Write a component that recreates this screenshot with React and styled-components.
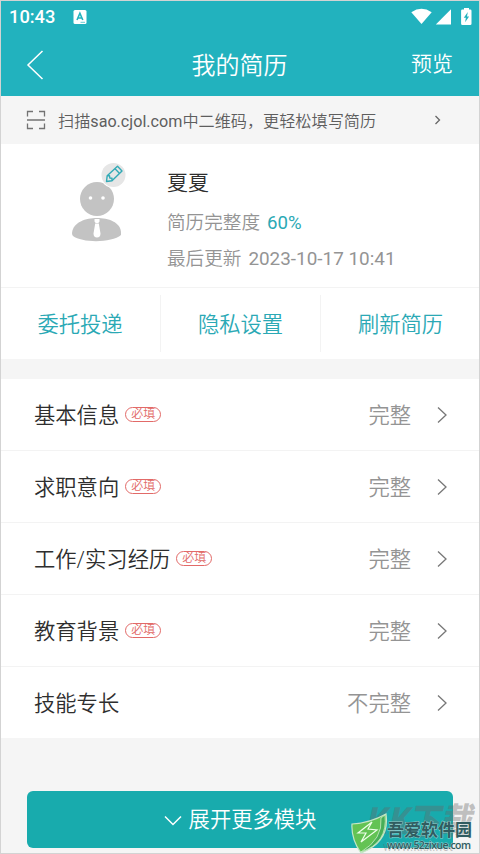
import React from 'react';
import styled, { createGlobalStyle } from 'styled-components';

// ==============================================

const TEAL = '#22b2be';
const TEAL_TEXT = '#2ba9b5';
const LINE = '#f3f3f3';

const SECTIONS = [
  { title: '基本信息', required: true, status: '完整' },
  { title: '求职意向', required: true, status: '完整' },
  { title: '工作/实习经历', required: true, status: '完整' },
  { title: '教育背景', required: true, status: '完整' },
  { title: '技能专长', required: false, status: '不完整' },
];

const ACTIONS = ['委托投递', '隐私设置', '刷新简历'];

// ==============================================

const GlobalStyle = createGlobalStyle`
  * {
    box-sizing: border-box;
  }
  body {
    margin: 0;
    font-family: Roboto, 'Noto Sans CJK SC', sans-serif;
    font-weight: 350;
    overflow: hidden;
  }
`;

const Screen = styled.div`
  position: relative;
  display: flex;
  flex-direction: column;
  width: 480px;
  height: 854px;
  border: 1px solid #d3d3d3;
  background: #f5f5f5;
  color: #2e2e2e;
  overflow: hidden;
`;

const Header = styled.header`
  height: 95px;
  flex: none;
  background: ${TEAL};
  color: #fff;
`;

const StatusBar = styled.div`
  display: flex;
  align-items: center;
  height: 31px;
  padding: 0 7px 0 8px;
`;

const Clock = styled.span`
  width: 64px;
  font-size: 18.3px;
  font-weight: 500;
  line-height: 31px;
`;

const StatusIcons = styled.div`
  display: flex;
  margin-left: auto;
`;

const TitleBar = styled.div`
  display: grid;
  grid-template-columns: 1fr auto 1fr;
  align-items: center;
  height: 64px;
  padding: 0 26px 0 25px;
`;

const Title = styled.h1`
  margin: 0;
  padding-top: 2px;
  font-size: 24px;
  font-weight: 350;
  line-height: 64px;
`;

const Preview = styled.span`
  justify-self: end;
  margin-top: -2px;
  font-size: 21px;
  line-height: 30px;
`;

const ScanTip = styled.div`
  display: flex;
  align-items: center;
  flex: none;
  height: 48px;
  padding: 0 38px 0 25px;
  color: #5e5e5e;
  font-size: 16.15px;
`;

const ScanText = styled.span`
  flex: 1;
  margin-left: 12px;
  white-space: nowrap;
`;

const Latin = styled.span`
  font-weight: 400;
`;

const Profile = styled.section`
  display: flex;
  flex: none;
  height: 144px;
  background: #fff;
  border-bottom: 1px solid ${LINE};
`;

const Avatar = styled.div`
  width: 166px;
  padding: 18px 0 0 69px;
`;

const Info = styled.div`
  display: flex;
  flex-direction: column;
  padding-top: 22px;
  color: #949494;
  font-size: 18.6px;
`;

const Name = styled.div`
  height: 40px;
  color: #2e2e2e;
  font-size: 21px;
  line-height: 34px;
`;

const InfoLine = styled.div`
  height: 35px;
  line-height: 35px;
`;

const Percent = styled(Latin)`
  margin-left: 7px;
  color: ${TEAL_TEXT};
`;

const Stamp = styled(Latin)`
  margin-left: 7px;
  font-size: 18.9px;
`;

const Actions = styled.div`
  display: grid;
  grid-template-columns: repeat(3, 160px);
  justify-content: center;
  flex: none;
  height: 71px;
  padding: 7px 0;
  margin-bottom: 20px;
  background: #fff;
`;

const Action = styled.div`
  display: grid;
  place-items: center;
  padding-bottom: 2px;
  color: ${TEAL_TEXT};
  font-size: 21.3px;

  & + & {
    border-left: 1px solid ${LINE};
  }
`;

const List = styled.div`
  flex: none;
  background: #fff;
`;

const Row = styled.div`
  display: flex;
  align-items: center;
  height: 72px;
  padding: 0 31px 0 33px;
  font-size: 21.3px;

  &:first-child {
    height: 71px;
  }
  & + & {
    border-top: 1px solid ${LINE};
  }
`;

const RowTitle = styled.span`
  margin-top: -3px;
`;

const Required = styled.span`
  display: grid;
  place-items: center;
  width: 36px;
  height: 15px;
  margin: -1px 0 0 6px;
  border: 1px solid #e26a68;
  border-radius: 8px;
  color: #e26a68;
  font-size: 12px;
  line-height: 12px;
`;

const Status = styled.span`
  margin: -3px 26px 0 auto;
  color: #949494;
`;

const Expand = styled.button`
  display: flex;
  justify-content: center;
  align-items: center;
  flex: none;
  gap: 7px;
  height: 57px;
  margin: 53px 26px 0;
  padding: 1px 0 0;
  border: 0;
  border-radius: 6px;
  background: #18abad;
  color: #fff;
  font-family: inherit;
  font-size: 21.3px;
  font-weight: inherit;
  line-height: 24px;
`;

// Site marks lie over the bottom right corner
const Mark = styled.svg`
  position: absolute;
  left: 346px;
  top: 790px;
`;

// ==============================================

function Chevron({ width, height, stroke, points, weight = 1.5 }) {
  return (
    <svg width={width} height={height} fill='none' stroke={stroke} strokeWidth={weight}>
      <polyline points={points} />
    </svg>
  );
}

function AppBadge() {
  return (
    <svg width='14' height='14' viewBox='0 0 14 14'>
      <rect x='0.5' width='13' height='14' rx='1.5' fill='#fff' />
      <path d='M4 10 L6.9 3.3 L9.8 10 M5 8 H8.8' fill='none' stroke={TEAL} strokeWidth='1.6' />
      <path d='M7.5 12.3 H12' stroke={TEAL} strokeWidth='0.7' />
    </svg>
  );
}

function SystemIcons() {
  return (
    <svg width='62' height='18' viewBox='0 0 62 18' fill='#fff'>
      <path d='M1.3 4.2 Q11.5 -2.7 21.7 4.2 L11.5 16 Z' />
      <path d='M41 1.2 V16.5 H25.8 Z' />
      <path d='M54 0 h5 v1.5 h1.2 q1.3 0 1.3 1.3 v13 q0 1.2 -1.3 1.2 h-7.8 q-1.3 0 -1.3 -1.2 v-13 q0 -1.3 1.3 -1.3 h1.6 z' />
      <path d='M57.8 4 L53.8 9.7 H55.9 L55.1 14.3 L59.1 8.6 H57 Z' fill={TEAL} />
    </svg>
  );
}

function ScanIcon() {
  return (
    <svg width='20' height='20' fill='none' stroke='#737373' strokeWidth='1.3'>
      <path d='M1.5 6.5 V1.5 H7 M13 1.5 H18.5 V6.5 M18.5 13.5 V18.5 H13 M7 18.5 H1.5 V13.5 M1 10 H19' />
    </svg>
  );
}

function Person() {
  return (
    <svg width='60' height='82' viewBox='0 0 60 82'>
      <circle cx='27' cy='37' r='17' fill='#c3c3c3' />
      <circle cx='20.5' cy='36' r='1.8' fill='#fff' />
      <circle cx='33' cy='36' r='1.8' fill='#fff' />
      <path d='M2 71 C3 60 16 56 27 56 S51 60 51 71 V73 C42 81 12 81 3 74 Q2 73 2 71 Z' fill='#c3c3c3' />
      <path d='M24.5 57 h5 v2.5 l-1.2 1.4 h-2.6 l-1.2 -1.4 z M25.2 61.5 h3.6 l1.7 10 q0 4 -3.5 4 t-3.5 -4 z' fill='#fff' />
      <circle cx='43.5' cy='13' r='13' fill='#fff' />
      <circle cx='43.5' cy='13' r='12' fill='#e6e6e6' />
      <g fill='none' stroke='#32aab6' strokeWidth='1.4' strokeLinejoin='round'>
        <path d='M36.5 19.5 L37.2 13.7 L47.5 4.3 L52 8.9 L42 18.7 Z' />
        <path d='M37.2 13.7 L39.5 13.7 L39.8 16 L42 16.2 L42 18.7 M45 6.8 L49.4 11.3' />
      </g>
    </svg>
  );
}

function SiteMark() {
  return (
    <Mark width='133' height='64' viewBox='0 0 133 64'>
      <g fill='#666' fillOpacity='0.38' fontFamily="'Noto Sans CJK SC', sans-serif" fontWeight='900'>
        <text x='17' y='43' fontSize='36' fontStyle='italic' textLength='107' lengthAdjust='spacingAndGlyphs'>KK下载</text>
        <text x='36' y='60' fontSize='12' fontFamily='Roboto, sans-serif' fontWeight='400' textLength='70'>www.kkx.net</text>
      </g>
      <path d='M5 33 Q23 32 39 23 Q43 51 14 62 Q4 48 5 33 Z' fill='#63c354' stroke='#c5e6c5' strokeWidth='1.2' />
      <path d='M34 27 Q36 48 14 61 Q41 52 38 24 Z' fill='#48ae57' stroke='#d8f0d6' strokeWidth='0.7' />
      <path d='M25 31 L11 42 L19 42 L14 51 L30 39 L21 38 Z' fill='#63c354' stroke='#efffea' strokeWidth='1.2' />
      <g fill='#305c60' stroke='#dce9e9' strokeOpacity='0.6' strokeWidth='1' paintOrder='stroke' fontFamily="'Noto Sans CJK SC', sans-serif">
        <text x='40' y='45' fontSize='17' fontWeight='700' textLength='85'>吾爱软件园</text>
        <text x='40' y='58' fontSize='10.5' fontFamily="'Open Sans', sans-serif" fontWeight='600' textLength='84'>www.52zixue.com</text>
      </g>
    </Mark>
  );
}

// ==============================================

export default function App() {
  return (
    <Screen>
      <GlobalStyle />
      <Header>
        <StatusBar>
          <Clock>10:43</Clock>
          <AppBadge />
          <StatusIcons>
            <SystemIcons />
          </StatusIcons>
        </StatusBar>
        <TitleBar>
          <Chevron width='18' height='32' stroke='#fff' points='16.5,2 2,16 16.5,30' />
          <Title>我的简历</Title>
          <Preview>预览</Preview>
        </TitleBar>
      </Header>

      <ScanTip>
        <ScanIcon />
        <ScanText>
          扫描<Latin>sao.cjol.com</Latin>中二维码，更轻松填写简历
        </ScanText>
        <Chevron width='7' height='10' stroke='#666' points='1.5,1 5.5,5 1.5,9' weight={1.3} />
      </ScanTip>

      <Profile>
        <Avatar>
          <Person />
        </Avatar>
        <Info>
          <Name>夏夏</Name>
          <InfoLine>
            简历完整度<Percent>60%</Percent>
          </InfoLine>
          <InfoLine>
            最后更新<Stamp>2023-10-17 10:41</Stamp>
          </InfoLine>
        </Info>
      </Profile>

      <Actions>
        {ACTIONS.map((label) => (
          <Action key={label}>{label}</Action>
        ))}
      </Actions>

      <List>
        {SECTIONS.map(({ title, required, status }) => (
          <Row key={title}>
            <RowTitle>{title}</RowTitle>
            {required && <Required>必填</Required>}
            <Status>{status}</Status>
            <Chevron width='11' height='18' stroke='#777' points='1,1.5 9,9 1,16.5' weight={1.3} />
          </Row>
        ))}
      </List>

      <Expand>
        <Chevron width='18' height='11' stroke='#fff' points='1,1.5 9,9.5 17,1.5' />
        展开更多模块
      </Expand>

      <SiteMark />
    </Screen>
  );
}

// ==============================================
